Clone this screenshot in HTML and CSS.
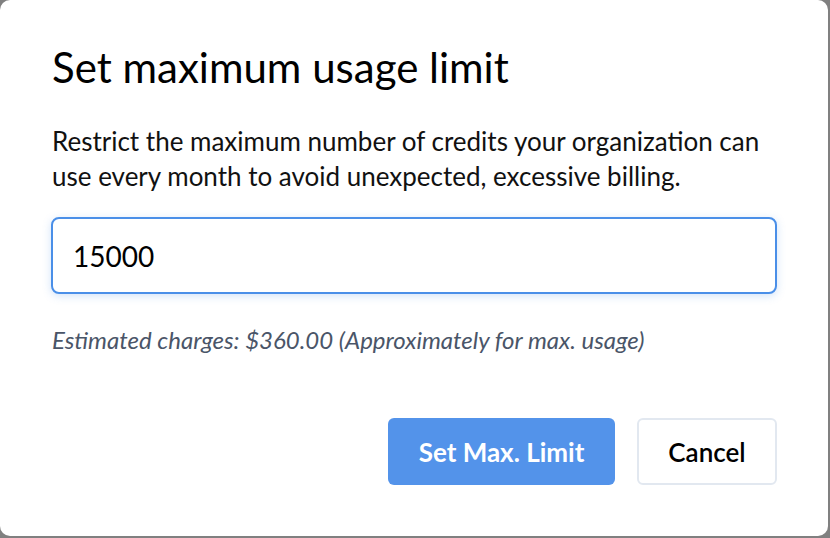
FILE: index.html
```html
<!DOCTYPE html>
<html lang="en">
<head>
  <meta charset="UTF-8" />
  <title>Set maximum usage limit</title>
  <link rel="stylesheet" href="styles.css">
</head>
<body>
  <div class="modal">
    <h2>Set maximum usage limit</h2>
    <p class="desc">Restrict the maximum number of credits your organization can use every month to avoid unexpected, excessive billing.</p>
    <input type="text" class="limit-input" value="15000">
    <p class="estimate">Estimated charges: $360.00 (Approximately for max. usage)</p>
    <div class="modal-buttons">
      <button class="set-btn">Set Max. Limit</button>
      <button class="cancel-btn">Cancel</button>
    </div>
  </div>
</body>
</html>
```

FILE: styles.css
```css
body {
  margin: 0;
  padding: 0;
  background-color: #808080;
  font-family: Lato, "Open Sans", sans-serif;
}
.modal {
  box-sizing: border-box;
  width: 828px;
  height: 536px;
  background-color: white;
  border-radius: 10px;
  padding: 42px 52px 0 52px;
}
h2 {
  margin: 0;
  font-size: 42px;
  font-weight: 400;
  color: #000;
  line-height: 50px;
}
.desc {
  margin: 32px 0 0 0;
  font-size: 26px;
  line-height: 35px;
  color: #111;
}
.limit-input {
  box-sizing: border-box;
  display: block;
  width: 726px;
  height: 77px;
  margin: 23px 0 0 -1px;
  padding: 0 20px;
  border: 2px solid #4a8fe8;
  border-radius: 8px;
  font-family: Lato, sans-serif;
  font-size: 28px;
  color: #000;
  outline: none;
  box-shadow: 0 2px 8px rgba(74, 143, 232, 0.25);
}
.estimate {
  margin: 31px 0 0 0;
  font-size: 24px;
  line-height: 29px;
  font-style: italic;
  color: #4a5568;
}
.modal-buttons {
  display: flex;
  justify-content: flex-end;
  gap: 22px;
  margin-top: 64px;
  margin-right: -1px;
}
.modal-buttons button {
  box-sizing: border-box;
  height: 67px;
  border-radius: 6px;
  font-family: Lato, sans-serif;
  font-size: 26px;
  cursor: pointer;
}
.set-btn {
  width: 227px;
  background-color: #5393ea;
  color: white;
  border: none;
  font-weight: 700;
}
.cancel-btn {
  width: 140px;
  background-color: white;
  color: #000;
  border: 2px solid #e2e8f0;
  font-weight: 600;
}
```
